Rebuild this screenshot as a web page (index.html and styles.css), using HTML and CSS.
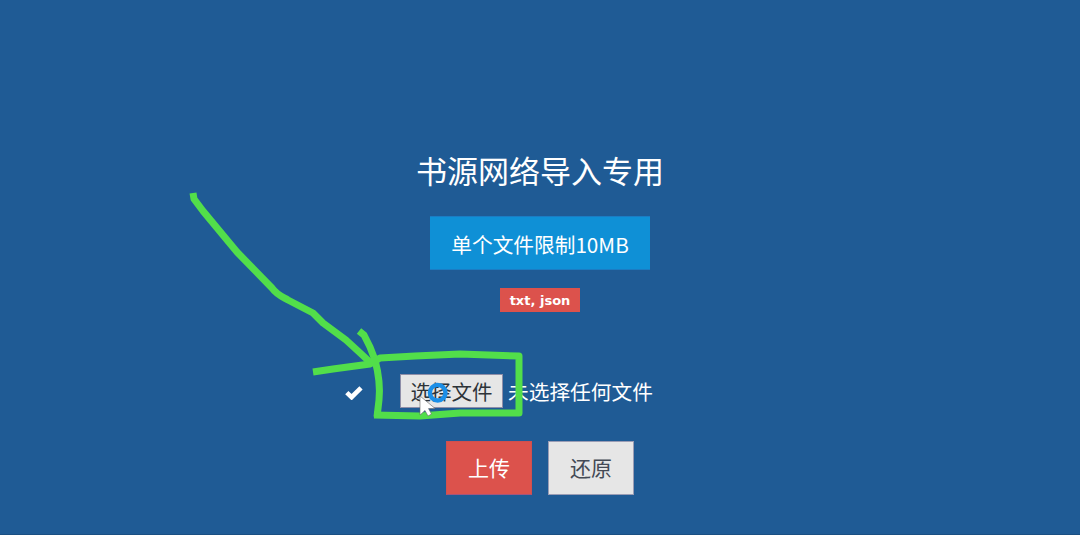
FILE: index.html
```html
<!DOCTYPE html>
<html lang="zh-CN">
<head>
<meta charset="utf-8">
<title>书源网络导入专用</title>
<link rel="stylesheet" href="styles.css">
</head>
<body>
<main class="page">
  <h1 class="title">书源网络导入专用</h1>
  <div class="notice">单个文件限制10MB</div>
  <span class="badge">txt, json</span>
  <form class="upload">
    <svg class="check" viewBox="0 0 18 15" aria-hidden="true"><path d="M1.8 7.6 L6.6 12.2 L16 2.8" fill="none" stroke="#fff" stroke-width="4.6" stroke-linejoin="miter"/></svg>
    <span class="file-btn">选择文件</span>
    <span class="file-text">未选择任何文件</span>
  </form>
  <div class="actions">
    <button class="btn btn-red" type="button">上传</button>
    <button class="btn btn-grey" type="button">还原</button>
  </div>
</main>
<svg class="overlay" viewBox="0 0 1080 535" aria-hidden="true">
  <g class="ink">
    <path d="M193 193 L194 199 L203 211 L237 252 L272 288 C277 295 283 297 288 300 L313 313 L323 323 L346 340 L358 351 L372 364"/>
    <path d="M359 331 L364 335 L370 347 L375 360 C379 375 380 390 379 400 L377 417"/>
    <path d="M313 372 L333 369 L370 364 L380 358 L415 356 L460 354 L519 356 L519 413 L460 413 L420 416 L374 415"/>
  </g>
  <circle class="ring" cx="437.7" cy="392.7" r="7.8"/>
  <path class="cursor" d="M420 396 L420 415 L425 410.5 L428 416 L431.5 414 L428.5 408.6 L435 408.4 Z"/>
</svg>
</body>
</html>
```
FILE: styles.css
```css
* { box-sizing: border-box; }
html, body { margin: 0; height: 100%; }
body {
  background: #1f5b95;
  color: #fff;
  font-family: "Noto Sans CJK SC", "Open Sans", sans-serif;
  overflow: hidden;
  position: relative;
  border-bottom: 1px solid #1a4f82;
}
.page {
  display: flex;
  flex-direction: column;
  align-items: center;
  padding-top: 147px;
}
.title {
  margin: 0;
  font-size: 31px;
  font-weight: 400;
  line-height: 46px;
  height: 46px;
}
.notice {
  margin-top: 23px;
  width: 220px;
  height: 54px;
  background: #0f90d6;
  border-top: 1px solid #1b7cc4;
  border-bottom: 1px solid #1b7cc4;
  font-size: 20.7px;
  line-height: 55px;
  text-align: center;
}
.badge {
  margin-top: 18px;
  width: 80px;
  height: 24px;
  background: #dc524c;
  font-family: "DejaVu Sans", sans-serif;
  font-size: 13px;
  font-weight: 700;
  line-height: 26px;
  text-align: center;
}
.upload {
  margin-top: 62px;
  width: 390px;
  display: flex;
  align-items: center;
  height: 34px;
}
.check { flex: none; width: 18px; height: 15px; margin-right: 37px; margin-top: 2px; }
.file-btn {
  flex: none;
  width: 103px;
  height: 34px;
  background: #e6e6e6;
  border: 1px solid #8e8ea8;
  color: #2d3338;
  font-size: 20.5px;
  line-height: 32px;
  text-align: center;
}
.file-text { margin-left: 5px; font-size: 20.7px; line-height: 34px; }
.actions {
  margin-top: 33px;
  display: flex;
  gap: 16px;
}
.btn {
  width: 86px;
  height: 54px;
  padding: 0 0 2px;
  font-family: inherit;
  font-size: 21px;
}
.btn-red { background: #dc524c; color: #fff; border: 1px solid #d0504f; border-bottom-color: #a5557a; }
.btn-grey { background: #e6e6e6; color: #444a55; border: 1px solid #9a9db5; }
.overlay {
  position: absolute;
  left: 0;
  top: 0;
  width: 1080px;
  height: 535px;
  pointer-events: none;
}
.ink path { fill: none; stroke: #52de4a; stroke-width: 7; stroke-linejoin: round; }
.ring { fill: none; stroke: #1b8fe8; stroke-width: 4.4; }
.cursor { fill: #fff; stroke: #666; stroke-width: .6; }
```
